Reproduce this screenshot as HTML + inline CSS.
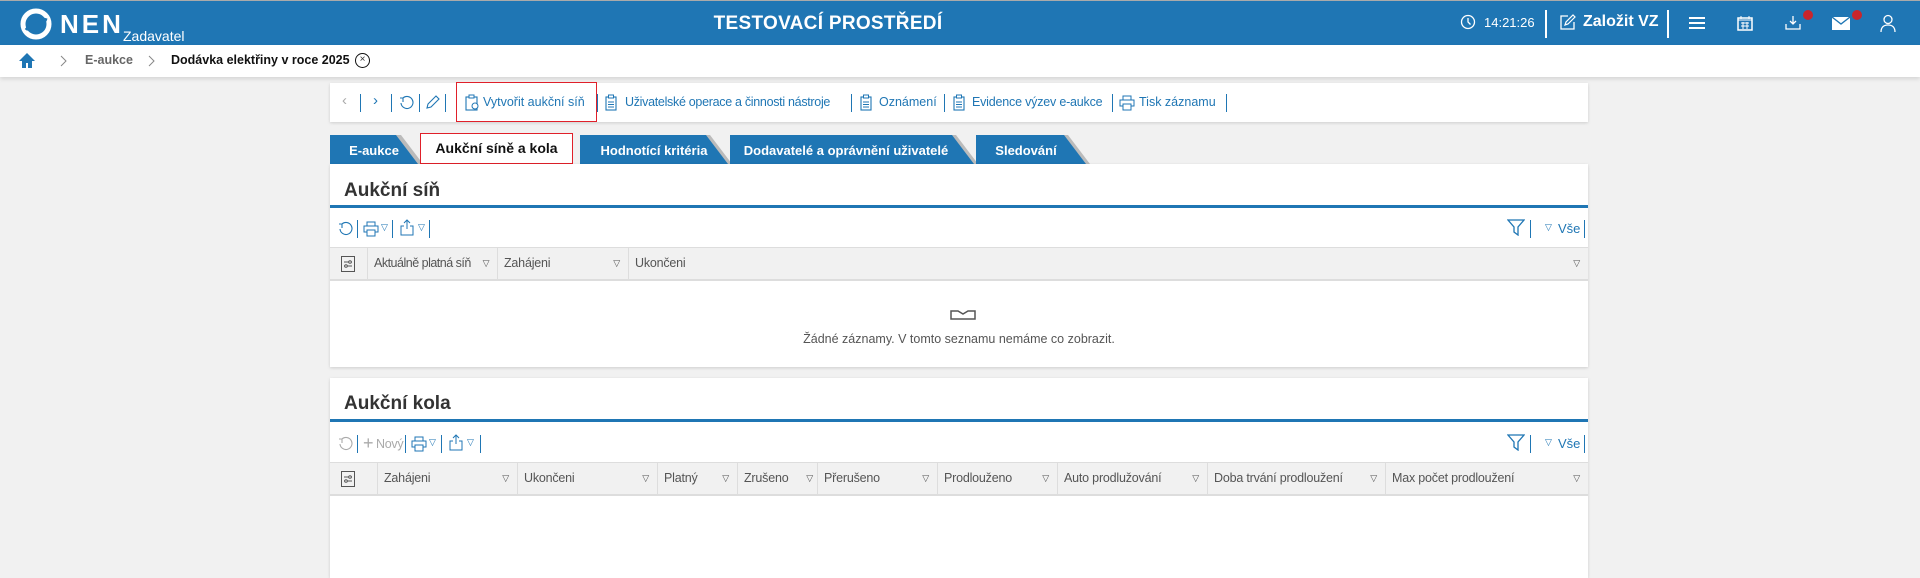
<!DOCTYPE html>
<html><head><meta charset="utf-8">
<style>
*{box-sizing:border-box;margin:0;padding:0}
body{width:1920px;height:575px;overflow:hidden;background:#f1f1f1;font-family:"Liberation Sans",sans-serif;position:relative;color:#333}
.a{position:absolute}
.hdr{left:0;top:0;width:1920px;height:45px;background:#1f76b4;border-top:1px solid #aaa}
.bc{left:0;top:45px;width:1920px;height:32px;background:#fff;box-shadow:0 2px 4px rgba(0,0,0,.12)}
.wt{color:#fff}
.panel{background:#fff;box-shadow:0 1px 3px rgba(0,0,0,.15)}
.tb{font-size:12.5px;color:#1f76b4;white-space:nowrap}
.sep{width:1px;height:18px;background:#1f76b4}
.tab{height:29px;top:135px;background:#1f76b4;color:#fff;font-weight:bold;font-size:13px;line-height:31px;text-align:center;clip-path:polygon(0 0,calc(100% - 22px) 0,100% 100%,0 100%)}
.tabsh{height:29px;top:135px;background:#bbb;clip-path:polygon(0 0,calc(100% - 22px) 0,100% 100%,0 100%)}
.title{font-size:19px;font-weight:bold;color:#333}
.line{height:3px;background:#1f76b4}
.th{background:#f1f1f1;border-top:1px solid #ddd;border-bottom:2px solid #ddd;font-size:12.5px;color:#555;letter-spacing:-.2px}
.col{position:absolute;top:0;height:100%;border-left:1px solid #ddd;padding-left:6px;line-height:31px;white-space:nowrap}
.tri{position:absolute;right:8px;top:0;font-size:9px;color:#555}
</style></head><body>
<div class="a hdr">
 <svg class="a" style="left:20px;top:7px" width="32" height="32" viewBox="0 0 32 32"><circle cx="16" cy="16" r="13" fill="none" stroke="#fff" stroke-width="5"/><path d="M6 22 Q16 8 27 12" stroke="#1f76b4" stroke-width="3" fill="none"/></svg>
 <div class="a wt" style="left:60px;top:8px;font-size:26px;font-weight:bold;letter-spacing:3px">NEN</div>
 <div class="a wt" style="left:123px;top:27px;font-size:14px">Zadavatel</div>
 <div class="a wt" style="left:0;width:1656px;top:12px;text-align:center;font-size:19px;font-weight:bold;letter-spacing:.3px">TESTOVACÍ PROSTŘEDÍ</div>
 <svg class="a" style="left:1460px;top:13px" width="16" height="16" viewBox="0 0 16 16"><circle cx="8" cy="8" r="6.5" fill="none" stroke="#fff" stroke-width="1.3"/><path d="M8 4v4l2.5 2.5" stroke="#fff" stroke-width="1.3" fill="none"/></svg>
 <div class="a wt" style="left:1484px;top:14px;font-size:13px">14:21:26</div>
 <div class="a" style="left:1545px;top:9px;width:2px;height:28px;background:#fff"></div>
 <svg class="a" style="left:1559px;top:13px" width="17" height="17" viewBox="0 0 17 17"><path d="M9 2H2v13h13V8" stroke="#fff" stroke-width="1.3" fill="none"/><path d="M6 11l1-3 7-7 2 2-7 7z" stroke="#fff" stroke-width="1.2" fill="none"/></svg>
 <div class="a wt" style="left:1583px;top:12px;font-size:16px;font-weight:bold">Založit VZ</div>
 <div class="a" style="left:1667px;top:9px;width:2px;height:28px;background:#fff"></div>
 <div class="a" style="left:1689px;top:16px;width:16px;height:2px;background:#fff;box-shadow:0 5px 0 #fff,0 10px 0 #fff"></div>
 <svg class="a" style="left:1737px;top:14px" width="16" height="16" viewBox="0 0 16 16"><rect x="1" y="3" width="14" height="12" fill="none" stroke="#fff" stroke-width="1.5"/><path d="M1 5h14M4 1v3M12 1v3M4 8h8M4 11h8M6 7v7M10 7v7" stroke="#fff" stroke-width="1"/></svg>
 <svg class="a" style="left:1784px;top:14px" width="18" height="16" viewBox="0 0 18 16"><path d="M9 1v8M6 6l3 3 3-3M2 9v5h14V9" stroke="#fff" stroke-width="1.3" fill="none"/></svg>
 <div class="a" style="left:1803px;top:9px;width:10px;height:10px;border-radius:50%;background:#c9252c"></div>
 <svg class="a" style="left:1832px;top:16px" width="18" height="13" viewBox="0 0 18 13"><rect x="0" y="0" width="18" height="13" fill="#fff"/><path d="M0 0l9 7 9-7" stroke="#1f76b4" stroke-width="1.3" fill="none"/></svg>
 <div class="a" style="left:1852px;top:9px;width:10px;height:10px;border-radius:50%;background:#c9252c"></div>
 <svg class="a" style="left:1880px;top:13px" width="16" height="18" viewBox="0 0 16 18"><circle cx="8" cy="5.5" r="4" fill="none" stroke="#fff" stroke-width="1.3"/><path d="M1 18c0-5 3-7 7-7s7 2 7 7" stroke="#fff" stroke-width="1.3" fill="none"/></svg>
</div>
<div class="a bc">
 <svg class="a" style="left:18px;top:7px" width="18" height="17" viewBox="0 0 18 17"><path d="M9 1L1 9h3v7h4v-5h2v5h4V9h3z" fill="#1f76b4"/></svg>
 <svg class="a" style="left:60px;top:10px" width="8" height="12" viewBox="0 0 8 12"><path d="M1 1l5 5-5 5" stroke="#888" fill="none"/></svg>
 <div class="a" style="left:85px;top:8px;font-size:12.5px;color:#666;font-weight:bold">E-aukce</div>
 <svg class="a" style="left:148px;top:10px" width="8" height="12" viewBox="0 0 8 12"><path d="M1 1l5 5-5 5" stroke="#888" fill="none"/></svg>
 <div class="a" style="left:171px;top:8px;font-size:12.5px;color:#111;font-weight:bold">Dodávka elektřiny v roce 2025</div>
 <div class="a" style="left:355px;top:8px;width:15px;height:15px;border:1.5px solid #111;border-radius:50%;font-size:10px;line-height:12px;text-align:center">×</div>
</div>

<div class="a panel" style="left:330px;top:83px;width:1258px;height:39px">
 <div class="a tb" style="left:12px;top:9px;color:#aaa;font-size:15px">‹</div>
 <div class="a sep" style="left:30px;top:11px"></div>
 <div class="a tb" style="left:43px;top:9px;font-size:15px">›</div>
 <div class="a sep" style="left:61px;top:11px"></div>
 <svg class="a" style="left:69px;top:12px" width="15" height="15" viewBox="0 0 15 15"><path d="M4 3A6 6 0 1 1 2 8M4 3V7M4 3H1" stroke="#1f76b4" stroke-width="1.1" fill="none"/></svg>
 <div class="a sep" style="left:89px;top:11px"></div>
 <svg class="a" style="left:95px;top:11px" width="16" height="16" viewBox="0 0 16 16"><path d="M2 14l1-4 8-8 3 3-8 8z" stroke="#1f76b4" stroke-width="1.1" fill="none"/></svg>
 <div class="a sep" style="left:115px;top:11px"></div>
 <div class="a" style="left:126px;top:-1px;width:141px;height:40px;border:1px solid #e0202a"></div>
 <svg class="a" style="left:135px;top:11px" width="14" height="17" viewBox="0 0 14 17"><rect x="1" y="3" width="11" height="13" fill="none" stroke="#1f76b4" stroke-width="1.1"/><rect x="4" y="1" width="5" height="3" fill="#fff" stroke="#1f76b4"/><circle cx="10" cy="12" r="3" fill="#fff" stroke="#1f76b4"/></svg>
 <div class="a tb" style="left:153px;top:12px">Vytvořit aukční síň</div>
 <div class="a sep" style="left:267px;top:11px"></div>
 <svg class="a" style="left:275px;top:11px" width="12" height="17" viewBox="0 0 12 17"><rect x="1" y="3" width="10" height="13" fill="none" stroke="#1f76b4" stroke-width="1.1"/><rect x="3.5" y="1" width="5" height="3" fill="#fff" stroke="#1f76b4"/><path d="M3 8h6M3 10.5h6M3 13h6" stroke="#1f76b4"/></svg>
 <div class="a tb" style="left:295px;top:12px;letter-spacing:-.3px">Uživatelské operace a činnosti nástroje</div>
 <div class="a sep" style="left:521px;top:11px"></div>
 <svg class="a" style="left:530px;top:11px" width="12" height="17" viewBox="0 0 12 17"><rect x="1" y="3" width="10" height="13" fill="none" stroke="#1f76b4" stroke-width="1.1"/><rect x="3.5" y="1" width="5" height="3" fill="#fff" stroke="#1f76b4"/><path d="M3 8h6M3 10.5h6M3 13h6" stroke="#1f76b4"/></svg>
 <div class="a tb" style="left:549px;top:12px">Oznámení</div>
 <div class="a sep" style="left:614px;top:11px"></div>
 <svg class="a" style="left:623px;top:11px" width="12" height="17" viewBox="0 0 12 17"><rect x="1" y="3" width="10" height="13" fill="none" stroke="#1f76b4" stroke-width="1.1"/><rect x="3.5" y="1" width="5" height="3" fill="#fff" stroke="#1f76b4"/><path d="M3 8h6M3 10.5h6M3 13h6" stroke="#1f76b4"/></svg>
 <div class="a tb" style="left:642px;top:12px;letter-spacing:-.2px">Evidence výzev e-aukce</div>
 <div class="a sep" style="left:782px;top:11px"></div>
 <svg class="a" style="left:789px;top:12px" width="16" height="16" viewBox="0 0 16 16"><rect x="4" y="1" width="8" height="4" fill="none" stroke="#1f76b4"/><rect x="1" y="5" width="14" height="6" fill="none" stroke="#1f76b4"/><rect x="4" y="9" width="8" height="6" fill="#fff" stroke="#1f76b4"/></svg>
 <div class="a tb" style="left:809px;top:12px">Tisk záznamu</div>
 <div class="a sep" style="left:896px;top:11px"></div>
</div>

<div class="a tabsh" style="left:333px;width:90px"></div>
<div class="a tab" style="left:330px;width:88px">E-aukce</div>
<div class="a" style="left:420px;top:133px;width:153px;height:31px;background:#fff;border:1px solid #e0202a;font-weight:bold;font-size:14px;line-height:29px;text-align:center;color:#111">Aukční síně a kola</div>
<div class="a tabsh" style="left:584px;width:148px"></div>
<div class="a tab" style="left:580px;width:148px">Hodnotící kritéria</div>
<div class="a tabsh" style="left:734px;width:244px"></div>
<div class="a tab" style="left:730px;width:244px;padding-right:12px">Dodavatelé a oprávnění uživatelé</div>
<div class="a tabsh" style="left:980px;width:110px"></div>
<div class="a tab" style="left:976px;width:110px;padding-right:10px">Sledování</div>

<div class="a panel" style="left:330px;top:164px;width:1258px;height:203px">
 <div class="a title" style="left:14px;top:16px">Aukční síň</div>
 <div class="a line" style="left:0;top:41px;width:1258px"></div>
 <svg class="a" style="left:8px;top:57px" width="15" height="15" viewBox="0 0 15 15"><path d="M4 3A6 6 0 1 1 2 8M4 3V7M4 3H1" stroke="#1f76b4" stroke-width="1.1" fill="none"/></svg>
 <div class="a sep" style="left:27px;top:56px"></div>
 <svg class="a" style="left:33px;top:57px" width="16" height="16" viewBox="0 0 16 16"><rect x="4" y="1" width="8" height="4" fill="none" stroke="#1f76b4"/><rect x="1" y="5" width="14" height="6" fill="none" stroke="#1f76b4"/><rect x="4" y="9" width="8" height="6" fill="#fff" stroke="#1f76b4"/></svg>
 <div class="a tb" style="left:51px;top:58px;font-size:9px">▽</div>
 <div class="a sep" style="left:62px;top:56px"></div>
 <svg class="a" style="left:70px;top:55px" width="14" height="17" viewBox="0 0 14 17"><path d="M7 1v9M4 4l3-3 3 3M4 7H1v9h12V7h-3" stroke="#1f76b4" fill="none"/></svg>
 <div class="a tb" style="left:88px;top:58px;font-size:9px">▽</div>
 <div class="a sep" style="left:99px;top:56px"></div>
 <svg class="a" style="left:1177px;top:55px" width="18" height="17" viewBox="0 0 18 17"><path d="M1 1h16l-6 7v8l-4-3V8z" stroke="#1f76b4" stroke-width="1.3" fill="none"/></svg>
 <div class="a sep" style="left:1200px;top:56px"></div>
 <div class="a tb" style="left:1215px;top:58px;font-size:9px">▽</div>
 <div class="a tb" style="left:1228px;top:57px;font-size:13px">Vše</div>
 <div class="a sep" style="left:1254px;top:56px"></div>
 <div class="a th" style="left:0;top:83px;width:1258px;height:34px">
  <svg class="a" style="left:11px;top:8px" width="14" height="16" viewBox="0 0 14 16"><rect x=".5" y=".5" width="13" height="15" fill="none" stroke="#555"/><path d="M3 6h8M3 10h8" stroke="#555"/><circle cx="9" cy="6" r="1.3" fill="#fff" stroke="#555"/><circle cx="5" cy="10" r="1.3" fill="#fff" stroke="#555"/></svg>
  <div class="col" style="left:37px;width:130px;letter-spacing:-.5px">Aktuálně platná síň<span class="tri">▽</span></div>
  <div class="col" style="left:167px;width:131px">Zahájeni<span class="tri">▽</span></div>
  <div class="col" style="left:298px;width:960px">Ukončeni<span class="tri">▽</span></div>
 </div>
 <svg class="a" style="left:620px;top:146px" width="26" height="10" viewBox="0 0 26 10"><path d="M1 1h7l5 3 5-3h7v8H1z" stroke="#555" stroke-width="1.5" fill="none"/></svg>
 <div class="a" style="left:0;width:1258px;top:168px;text-align:center;font-size:12.5px;color:#555">Žádné záznamy. V tomto seznamu nemáme co zobrazit.</div>
</div>

<div class="a panel" style="left:330px;top:378px;width:1258px;height:200px">
 <div class="a title" style="left:14px;top:15px">Aukční kola</div>
 <div class="a line" style="left:0;top:41px;width:1258px"></div>
 <svg class="a" style="left:8px;top:58px" width="15" height="15" viewBox="0 0 15 15"><path d="M4 3A6 6 0 1 1 2 8M4 3V7M4 3H1" stroke="#aaa" stroke-width="1.1" fill="none"/></svg>
 <div class="a sep" style="left:27px;top:57px"></div>
 <div class="a tb" style="left:33px;top:55px;font-size:18px;color:#aaa">+</div>
 <div class="a tb" style="left:46px;top:59px;color:#aaa;letter-spacing:-.3px">Nový</div>
 <div class="a sep" style="left:75px;top:57px"></div>
 <svg class="a" style="left:81px;top:58px" width="16" height="16" viewBox="0 0 16 16"><rect x="4" y="1" width="8" height="4" fill="none" stroke="#1f76b4"/><rect x="1" y="5" width="14" height="6" fill="none" stroke="#1f76b4"/><rect x="4" y="9" width="8" height="6" fill="#fff" stroke="#1f76b4"/></svg>
 <div class="a tb" style="left:99px;top:59px;font-size:9px">▽</div>
 <div class="a sep" style="left:111px;top:57px"></div>
 <svg class="a" style="left:119px;top:56px" width="14" height="17" viewBox="0 0 14 17"><path d="M7 1v9M4 4l3-3 3 3M4 7H1v9h12V7h-3" stroke="#1f76b4" fill="none"/></svg>
 <div class="a tb" style="left:137px;top:59px;font-size:9px">▽</div>
 <div class="a sep" style="left:150px;top:57px"></div>
 <svg class="a" style="left:1177px;top:56px" width="18" height="17" viewBox="0 0 18 17"><path d="M1 1h16l-6 7v8l-4-3V8z" stroke="#1f76b4" stroke-width="1.3" fill="none"/></svg>
 <div class="a sep" style="left:1200px;top:57px"></div>
 <div class="a tb" style="left:1215px;top:59px;font-size:9px">▽</div>
 <div class="a tb" style="left:1228px;top:58px;font-size:13px">Vše</div>
 <div class="a sep" style="left:1254px;top:57px"></div>
 <div class="a th" style="left:0;top:84px;width:1258px;height:34px">
  <svg class="a" style="left:11px;top:8px" width="14" height="16" viewBox="0 0 14 16"><rect x=".5" y=".5" width="13" height="15" fill="none" stroke="#555"/><path d="M3 6h8M3 10h8" stroke="#555"/><circle cx="9" cy="6" r="1.3" fill="#fff" stroke="#555"/><circle cx="5" cy="10" r="1.3" fill="#fff" stroke="#555"/></svg>
  <div class="col" style="left:47px;width:140px">Zahájeni<span class="tri">▽</span></div>
  <div class="col" style="left:187px;width:140px">Ukončeni<span class="tri">▽</span></div>
  <div class="col" style="left:327px;width:80px">Platný<span class="tri">▽</span></div>
  <div class="col" style="left:407px;width:80px">Zrušeno<span class="tri" style="right:4px">▽</span></div>
  <div class="col" style="left:487px;width:120px">Přerušeno<span class="tri">▽</span></div>
  <div class="col" style="left:607px;width:120px">Prodlouženo<span class="tri">▽</span></div>
  <div class="col" style="left:727px;width:150px">Auto prodlužování<span class="tri">▽</span></div>
  <div class="col" style="left:877px;width:178px">Doba trvání prodloužení<span class="tri">▽</span></div>
  <div class="col" style="left:1055px;width:203px">Max počet prodloužení<span class="tri">▽</span></div>
 </div>
</div>
</body></html>
